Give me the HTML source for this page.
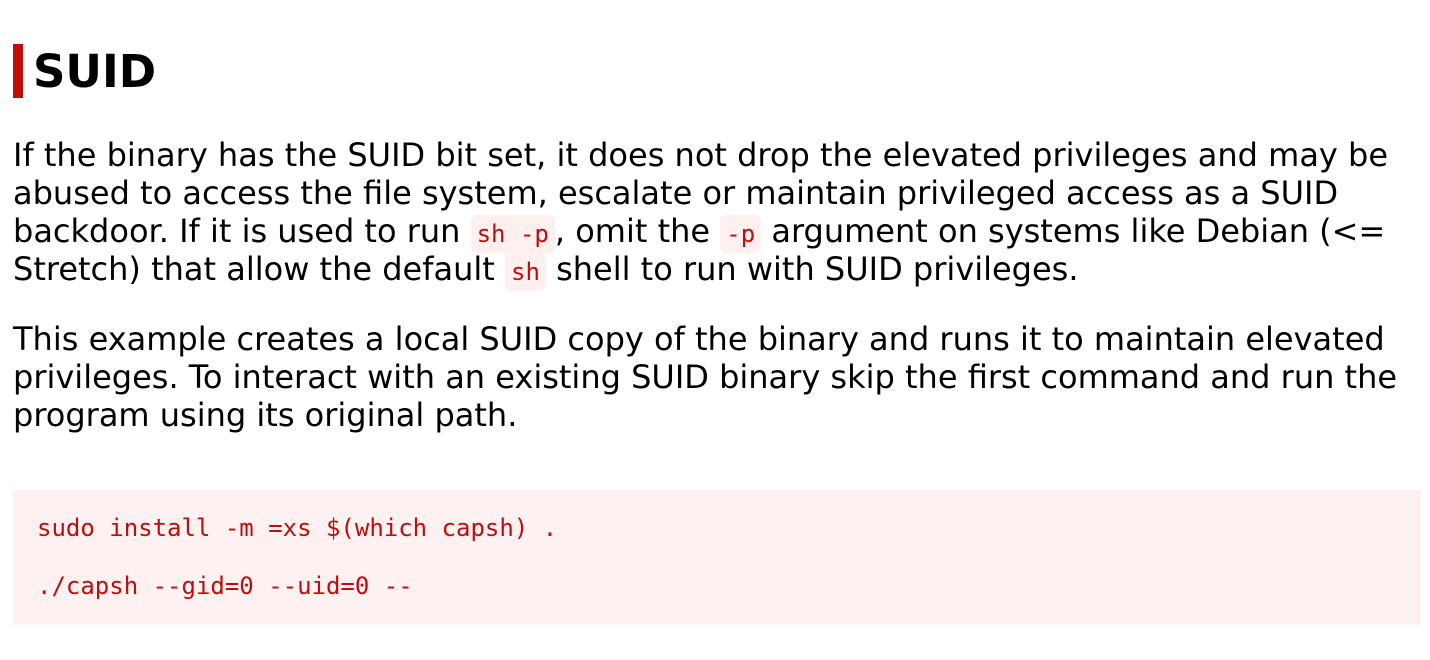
<!DOCTYPE html>
<html><head><meta charset="utf-8"><style>
body{margin:0;background:#fff;font-family:"DejaVu Sans","Liberation Sans",sans-serif;color:#000;width:1430px;height:660px;overflow:hidden}
.w{position:absolute;left:13px;top:0;width:1408px}
h2{position:absolute;left:0;top:44px;margin:0;height:54px;border-left:10px solid #c00c0c;padding-left:10px;font-size:45px;line-height:56px;font-weight:bold}
p{position:absolute;left:0;margin:0;font-size:32px;line-height:38px;width:1408px}
code{font-family:"DejaVu Sans Mono","Liberation Mono",monospace;font-size:24px;line-height:1;color:#c00c0c;background:#fdf0ef;border-radius:6px;padding:5px 6px}
pre{position:absolute;left:0;top:490px;margin:0;width:1360px;padding:24px;background:#fdf2f1;font-family:"DejaVu Sans Mono","Liberation Mono",monospace;font-size:24px;line-height:29px;color:#c00c0c}
</style></head><body><div class="w">
<h2>SUID</h2>
<p style="top:136px">If the binary has the SUID bit set, it does not drop the elevated privileges and may be abused to access the file system, escalate or maintain privileged access as a SUID backdoor. If it is used to run <code>sh -p</code>, omit the <code>-p</code> argument on systems like Debian (&lt;= Stretch) that allow the default <code>sh</code> shell to run with SUID privileges.</p>
<p style="top:320px">This example creates a local SUID copy of the binary and runs it to maintain elevated privileges. To interact with an existing SUID binary skip the first command and run the program using its original path.</p>
<pre>sudo install -m =xs $(which capsh) .

./capsh --gid=0 --uid=0 --</pre>
</div></body></html>
